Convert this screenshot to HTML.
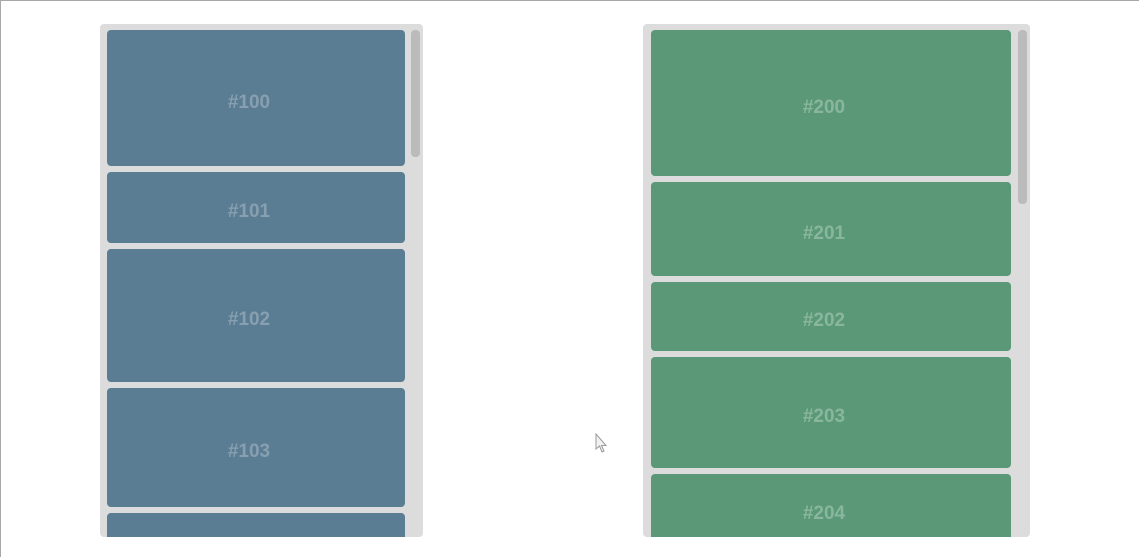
<!DOCTYPE html>
<html><head><style>
body{margin:0;width:1139px;height:557px;position:relative;background:#fff;overflow:hidden;font-family:"Liberation Sans",sans-serif;}
.frame{position:absolute;left:0;top:0;width:1139px;height:557px;border-top:1px solid #a8a8a8;border-left:1px solid #a8a8a8;box-sizing:border-box;}
.box{position:absolute;background:#dcdcdc;border-radius:4px;overflow:hidden;}
.it{position:absolute;border-radius:4px;display:flex;align-items:center;justify-content:center;font-weight:bold;font-size:19px;box-sizing:border-box;padding-top:9px;padding-right:14px;}
.b{background:#5a7d93;color:#879fb0;}
.g{background:#5a9877;color:#89b79d;}
.sb{position:absolute;background:#bbbbbb;border-radius:4px;width:9px;}
</style></head><body>
<div class="frame"></div>
<div class="box" style="left:100px;top:24px;width:323px;height:513px">
  <div class="it b" style="left:7px;top:6px;width:298px;height:136px">#100</div>
  <div class="it b" style="left:7px;top:148px;width:298px;height:71px">#101</div>
  <div class="it b" style="left:7px;top:225px;width:298px;height:133px">#102</div>
  <div class="it b" style="left:7px;top:364px;width:298px;height:119px">#103</div>
  <div class="it b" style="left:7px;top:489px;width:298px;height:60px"></div>
  <div class="sb" style="left:311px;top:6px;height:127px"></div>
</div>
<div class="box" style="left:643px;top:24px;width:387px;height:513px">
  <div class="it g" style="left:8px;top:6px;width:360px;height:146px">#200</div>
  <div class="it g" style="left:8px;top:158px;width:360px;height:94px">#201</div>
  <div class="it g" style="left:8px;top:258px;width:360px;height:69px">#202</div>
  <div class="it g" style="left:8px;top:333px;width:360px;height:111px">#203</div>
  <div class="it g" style="left:8px;top:450px;width:360px;height:78px;align-items:flex-start;padding-top:29px">#204</div>
  <div class="sb" style="left:375px;top:6px;height:174px"></div>
</div>
<svg style="position:absolute;left:595px;top:433px" width="14" height="22" viewBox="0 0 14 22"><path d="M1 1 L1 16 L4.5 13 L7 19 L9 18 L6.5 12.5 L11 12.5 Z" fill="#f2f2f2" stroke="#9a9a9a" stroke-width="1"/></svg>
</body></html>
